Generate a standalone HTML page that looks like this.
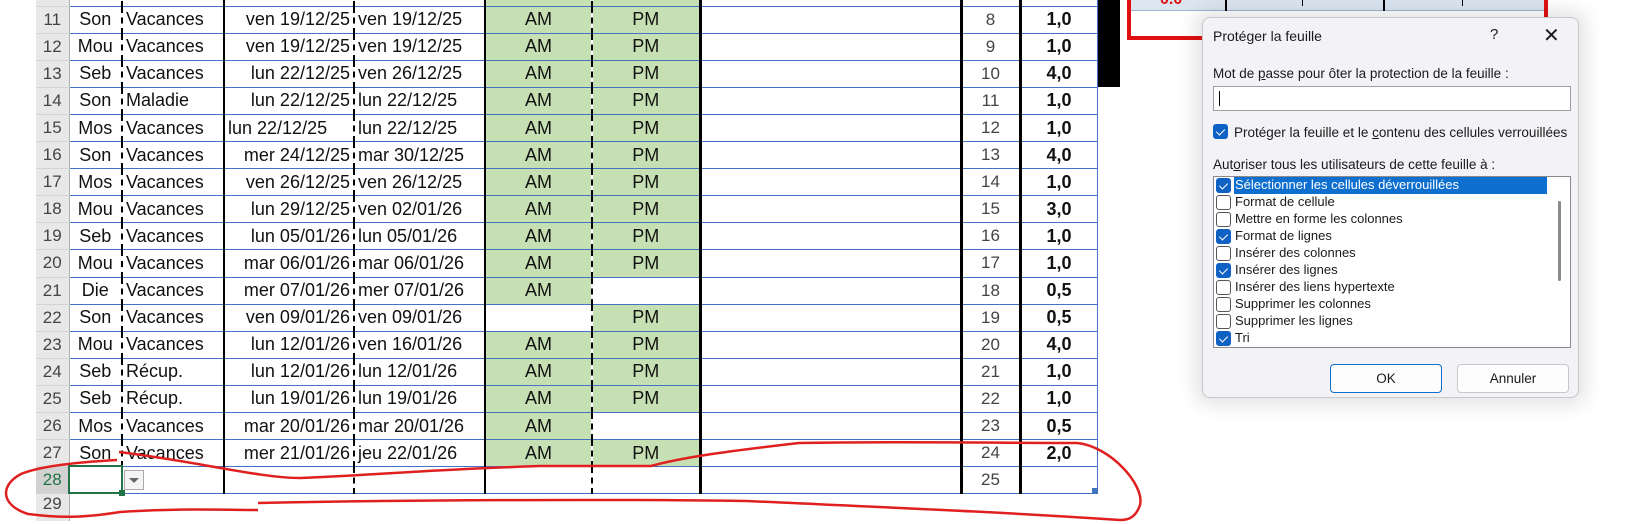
<!DOCTYPE html>
<html><head><meta charset="utf-8"><style>
*{margin:0;padding:0;box-sizing:border-box}
body{width:1629px;height:524px;overflow:hidden;background:#fff;position:relative;font-family:"Liberation Sans",sans-serif}
table{position:absolute;left:36px;top:-21px;border-collapse:collapse;table-layout:fixed}
td{height:27.1px;border-bottom:1px solid #4472c4;font-size:18px;color:#111;white-space:nowrap;overflow:hidden;padding:0 3px}
td.h{background:#e8e8e8;color:#444;border-right:1px solid #b0b0b0;border-bottom:1px solid #d4d4d4;text-align:center;font-size:17px}
td.n{text-align:center;border-right:2px dashed #000}
td.t{text-align:left;border-right:2px solid #000}
td.d1{text-align:right;border-right:2px dashed #000}
td.d2{text-align:left;border-right:2px solid #000}
td.am{background:#c6e0b4;text-align:center;border-right:2px dashed #000}
td.pm{background:#c6e0b4;text-align:center;border-right:3px solid #000}
td.w{background:#fff}
td.e{border-right:3px solid #000}
td.k{text-align:center;color:#444;border-right:3px solid #000;font-size:17px}
td.v{text-align:center;font-weight:bold;font-size:18px;border-right:1px solid #4472c4}
tr.last td.h{border-bottom:none}
.dlg{position:absolute;left:1202px;top:17px;width:377px;height:381px;background:#f3f2f6;border:1px solid #c8c8c8;border-radius:8px;box-shadow:0 0 18px 8px rgba(0,0,0,0.10);font-size:13.5px;color:#1a1a1a}
.dlg div{position:absolute}
.cb{width:15px;height:15px;border:1px solid #555;border-radius:3px;background:#fff}
.cb.on{background:#0f62c4;border-color:#0f62c4}
.cb.on:after{content:"";position:absolute;left:4px;top:2px;width:4px;height:7px;border:solid #fff;border-width:0 1.5px 1.5px 0;transform:rotate(45deg)}
.it{left:30px;font-size:13px}
</style></head><body>

<div style="position:absolute;left:1097px;top:0;width:23px;height:87px;background:#000"></div>
<div style="position:absolute;left:1127px;top:-4px;width:421px;height:44px;border:4px solid #e01010;background:#fff"></div>
<div style="position:absolute;left:1131px;top:0;width:413px;height:11px;background:#dce6f1;border-bottom:1px solid #9db3d3"></div>
<div style="position:absolute;left:1225px;top:0;width:2px;height:11px;background:#000"></div>
<div style="position:absolute;left:1302px;top:0;width:1px;height:6px;background:#000"></div>
<div style="position:absolute;left:1383px;top:0;width:2px;height:11px;background:#000"></div>
<div style="position:absolute;left:1462px;top:0;width:1px;height:6px;background:#000"></div>
<div style="position:absolute;left:1160px;top:-9px;color:#e01010;font-weight:bold;font-size:16px">0.0</div>

<table>
<colgroup><col style="width:33px"><col style="width:53px"><col style="width:102px"><col style="width:130px"><col style="width:131px"><col style="width:107px"><col style="width:108px"><col style="width:261px"><col style="width:59px"><col style="width:77px"></colgroup>
<tr><td class="h">10</td><td class="n"></td><td class="t"></td><td class="d1"></td><td class="d2"></td><td class="am"></td><td class="pm"></td><td class="e"></td><td class="k"></td><td class="v"></td></tr>
<tr><td class="h">11</td><td class="n">Son</td><td class="t">Vacances</td><td class="d1">ven 19/12/25</td><td class="d2">ven 19/12/25</td><td class="am">AM</td><td class="pm">PM</td><td class="e"></td><td class="k">8</td><td class="v">1,0</td></tr>
<tr><td class="h">12</td><td class="n">Mou</td><td class="t">Vacances</td><td class="d1">ven 19/12/25</td><td class="d2">ven 19/12/25</td><td class="am">AM</td><td class="pm">PM</td><td class="e"></td><td class="k">9</td><td class="v">1,0</td></tr>
<tr><td class="h">13</td><td class="n">Seb</td><td class="t">Vacances</td><td class="d1">lun 22/12/25</td><td class="d2">ven 26/12/25</td><td class="am">AM</td><td class="pm">PM</td><td class="e"></td><td class="k">10</td><td class="v">4,0</td></tr>
<tr><td class="h">14</td><td class="n">Son</td><td class="t">Maladie</td><td class="d1">lun 22/12/25</td><td class="d2">lun 22/12/25</td><td class="am">AM</td><td class="pm">PM</td><td class="e"></td><td class="k">11</td><td class="v">1,0</td></tr>
<tr><td class="h">15</td><td class="n">Mos</td><td class="t">Vacances</td><td class="d1" style="text-align:left">lun 22/12/25</td><td class="d2">lun 22/12/25</td><td class="am">AM</td><td class="pm">PM</td><td class="e"></td><td class="k">12</td><td class="v">1,0</td></tr>
<tr><td class="h">16</td><td class="n">Son</td><td class="t">Vacances</td><td class="d1">mer 24/12/25</td><td class="d2">mar 30/12/25</td><td class="am">AM</td><td class="pm">PM</td><td class="e"></td><td class="k">13</td><td class="v">4,0</td></tr>
<tr><td class="h">17</td><td class="n">Mos</td><td class="t">Vacances</td><td class="d1">ven 26/12/25</td><td class="d2">ven 26/12/25</td><td class="am">AM</td><td class="pm">PM</td><td class="e"></td><td class="k">14</td><td class="v">1,0</td></tr>
<tr><td class="h">18</td><td class="n">Mou</td><td class="t">Vacances</td><td class="d1">lun 29/12/25</td><td class="d2">ven 02/01/26</td><td class="am">AM</td><td class="pm">PM</td><td class="e"></td><td class="k">15</td><td class="v">3,0</td></tr>
<tr><td class="h">19</td><td class="n">Seb</td><td class="t">Vacances</td><td class="d1">lun 05/01/26</td><td class="d2">lun 05/01/26</td><td class="am">AM</td><td class="pm">PM</td><td class="e"></td><td class="k">16</td><td class="v">1,0</td></tr>
<tr><td class="h">20</td><td class="n">Mou</td><td class="t">Vacances</td><td class="d1">mar 06/01/26</td><td class="d2">mar 06/01/26</td><td class="am">AM</td><td class="pm">PM</td><td class="e"></td><td class="k">17</td><td class="v">1,0</td></tr>
<tr><td class="h">21</td><td class="n">Die</td><td class="t">Vacances</td><td class="d1">mer 07/01/26</td><td class="d2">mer 07/01/26</td><td class="am">AM</td><td class="pm w"></td><td class="e"></td><td class="k">18</td><td class="v">0,5</td></tr>
<tr><td class="h">22</td><td class="n">Son</td><td class="t">Vacances</td><td class="d1">ven 09/01/26</td><td class="d2">ven 09/01/26</td><td class="am w"></td><td class="pm">PM</td><td class="e"></td><td class="k">19</td><td class="v">0,5</td></tr>
<tr><td class="h">23</td><td class="n">Mou</td><td class="t">Vacances</td><td class="d1">lun 12/01/26</td><td class="d2">ven 16/01/26</td><td class="am">AM</td><td class="pm">PM</td><td class="e"></td><td class="k">20</td><td class="v">4,0</td></tr>
<tr><td class="h">24</td><td class="n">Seb</td><td class="t">Récup.</td><td class="d1">lun 12/01/26</td><td class="d2">lun 12/01/26</td><td class="am">AM</td><td class="pm">PM</td><td class="e"></td><td class="k">21</td><td class="v">1,0</td></tr>
<tr><td class="h">25</td><td class="n">Seb</td><td class="t">Récup.</td><td class="d1">lun 19/01/26</td><td class="d2">lun 19/01/26</td><td class="am">AM</td><td class="pm">PM</td><td class="e"></td><td class="k">22</td><td class="v">1,0</td></tr>
<tr><td class="h">26</td><td class="n">Mos</td><td class="t">Vacances</td><td class="d1">mar 20/01/26</td><td class="d2">mar 20/01/26</td><td class="am">AM</td><td class="pm w"></td><td class="e"></td><td class="k">23</td><td class="v">0,5</td></tr>
<tr><td class="h">27</td><td class="n">Son</td><td class="t">Vacances</td><td class="d1">mer 21/01/26</td><td class="d2">jeu 22/01/26</td><td class="am">AM</td><td class="pm">PM</td><td class="e"></td><td class="k">24</td><td class="v">2,0</td></tr>
<tr><td class="h" style="background:#d2d2d2;color:#217346">28</td><td class="n"></td><td class="t"></td><td class="d1"></td><td class="d2"></td><td class="am w"></td><td class="pm w"></td><td class="e"></td><td class="k">25</td><td class="v"></td></tr>
<tr class="last"><td class="h" style="height:14px;vertical-align:top;line-height:20px">29</td><td colspan="9" style="border:none"></td></tr>
</table>

<div style="position:absolute;left:68px;top:465px;width:55px;height:29px;border:2px solid #217346"></div>
<div style="position:absolute;left:119px;top:490px;width:6px;height:6px;background:#217346"></div>
<div style="position:absolute;left:124px;top:470px;width:20px;height:20px;border:1px solid #aaa;background:#f4f4f4"></div>
<div style="position:absolute;left:129px;top:478px;width:0;height:0;border-left:5px solid transparent;border-right:5px solid transparent;border-top:5px solid #666"></div>
<div style="position:absolute;left:1092px;top:488px;width:5px;height:5px;background:#4472c4"></div>

<svg style="position:absolute;left:0;top:0" width="1629" height="524">
<path d="M119,452 C200,462 260,478 300,478 C360,476 420,470 540,466 C600,466 640,466 651,466 C680,458 720,452 799,443 C900,441 1000,443 1077,443 C1110,446 1145,485 1140,505 C1135,520 1125,520 1120,520 C1000,512 900,508 747,501 C600,499 400,500 258,503" fill="none" stroke="#e02020" stroke-width="2.5"/>
<path d="M117,460 C80,462 40,466 21,474 C0,485 0,505 28,514 C60,518 83,518 120,512 C180,508 220,510 258,510" fill="none" stroke="#e02020" stroke-width="2.5"/>
</svg>

<div class="dlg">
<div style="left:10px;top:10px;font-size:14px">Protéger la feuille</div>
<div style="left:287px;top:8px;font-size:15px">?</div>
<div style="left:340px;top:5px;font-size:20px;font-weight:300">✕</div>
<div style="left:10px;top:48px">Mot de <u>p</u>asse pour ôter la protection de la feuille :</div>
<div style="left:10px;top:68px;width:358px;height:25px;background:#fff;border:1px solid #a0a0a0"><div style="left:5px;top:4px;width:1px;height:15px;background:#000"></div></div>
<div class="cb on" style="left:10px;top:106px"></div>
<div style="left:31px;top:107px">Protéger la feuille et le <u>c</u>ontenu des cellules verrouillées</div>
<div style="left:10px;top:139px">Aut<u>o</u>riser tous les utilisateurs de cette feuille à :</div>
<div style="left:10px;top:158px;width:358px;height:172px;background:#fff;border:1px solid #8a8a8a">
 <div style="left:20px;top:0;width:313px;height:17px;background:#0f6fcf"></div>
 <div class="cb on" style="left:2px;top:1px"></div><div class="it" style="top:0px;color:#fff;left:21px">Sélectionner les cellules déverrouillées</div>
 <div class="cb" style="left:2px;top:18px"></div><div class="it" style="top:17px;left:21px">Format de cellule</div>
 <div class="cb" style="left:2px;top:35px"></div><div class="it" style="top:34px;left:21px">Mettre en forme les colonnes</div>
 <div class="cb on" style="left:2px;top:52px"></div><div class="it" style="top:51px;left:21px">Format de lignes</div>
 <div class="cb" style="left:2px;top:69px"></div><div class="it" style="top:68px;left:21px">Insérer des colonnes</div>
 <div class="cb on" style="left:2px;top:86px"></div><div class="it" style="top:85px;left:21px">Insérer des lignes</div>
 <div class="cb" style="left:2px;top:103px"></div><div class="it" style="top:102px;left:21px">Insérer des liens hypertexte</div>
 <div class="cb" style="left:2px;top:120px"></div><div class="it" style="top:119px;left:21px">Supprimer les colonnes</div>
 <div class="cb" style="left:2px;top:137px"></div><div class="it" style="top:136px;left:21px">Supprimer les lignes</div>
 <div class="cb on" style="left:2px;top:154px"></div><div class="it" style="top:153px;left:21px">Tri</div>
 <div style="left:344px;top:24px;width:3px;height:80px;background:#8a8a8a;border-radius:2px"></div>
</div>
<div style="left:127px;top:346px;width:112px;height:29px;background:#fdfdfd;border:1px solid #0f6fcf;border-radius:4px;text-align:center;line-height:27px">OK</div>
<div style="left:254px;top:346px;width:112px;height:29px;background:#fdfdfd;border:1px solid #c8c8c8;border-radius:4px;text-align:center;line-height:27px">Annuler</div>
</div>
</body></html>
